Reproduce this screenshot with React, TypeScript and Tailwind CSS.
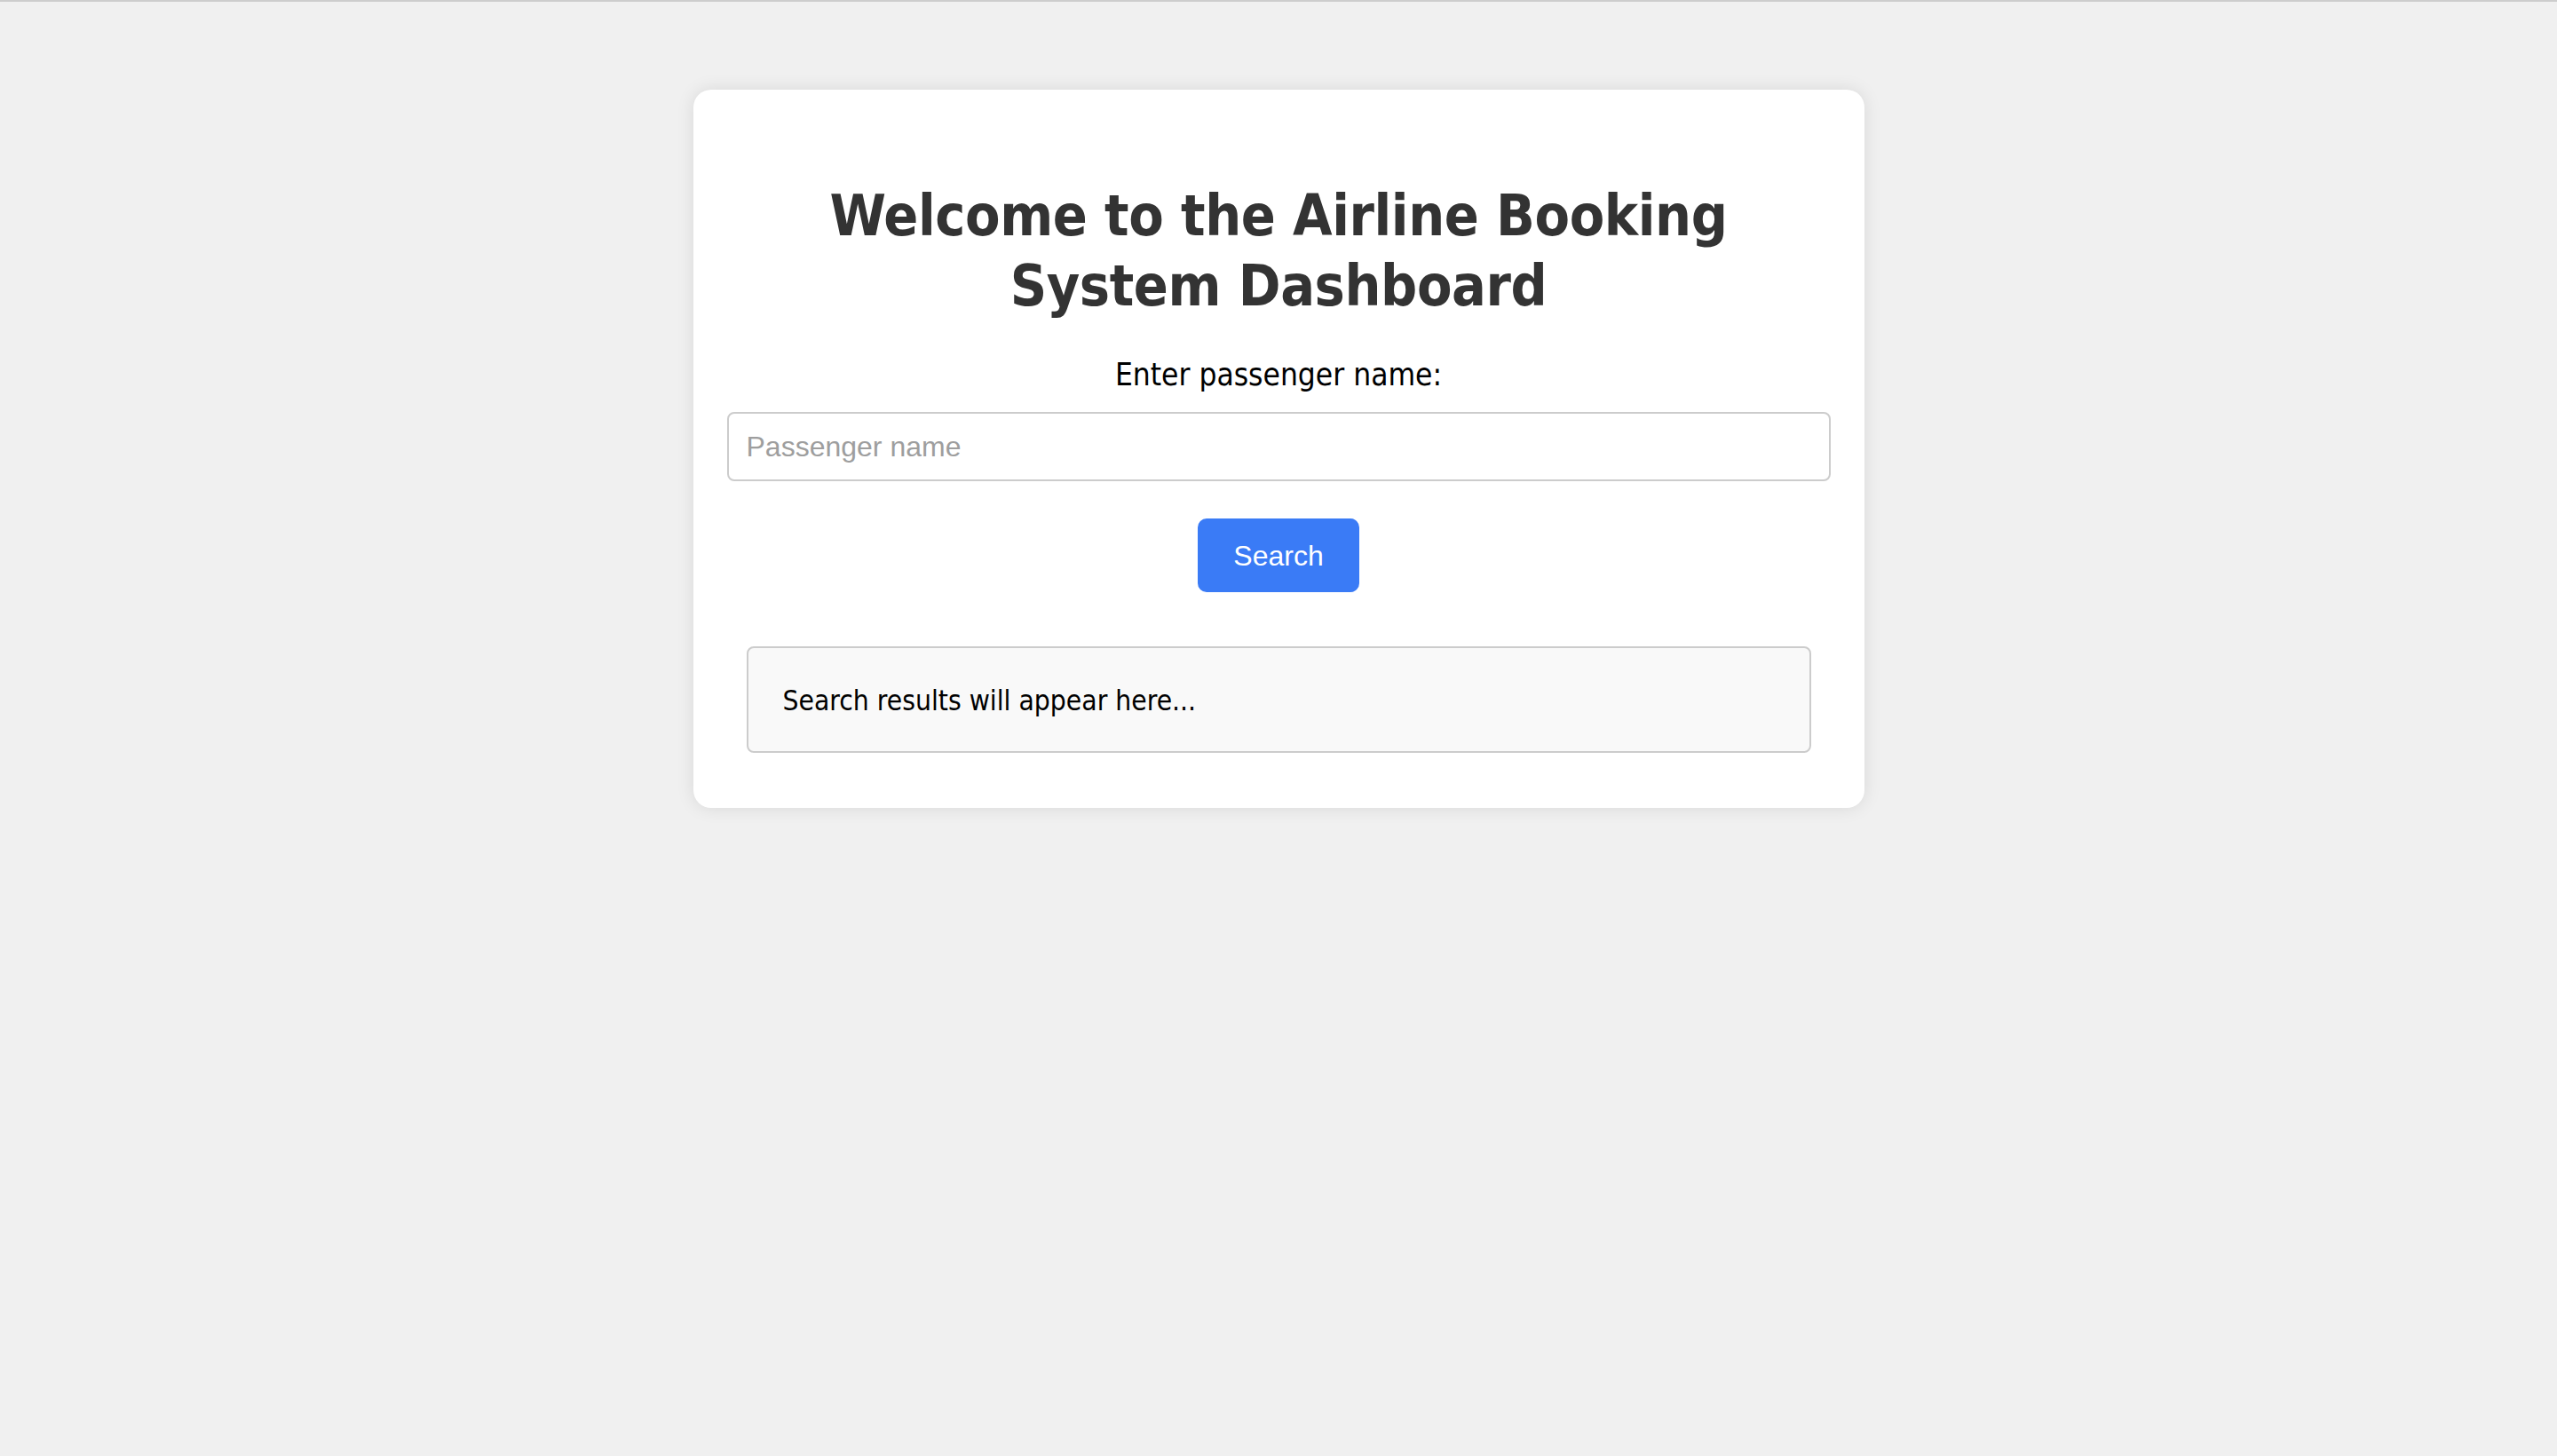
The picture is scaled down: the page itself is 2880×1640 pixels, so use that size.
import { useState } from "react";

const tahoma = "font-['DejaVu_Sans_Condensed','DejaVu_Sans',sans-serif]";
const system = "font-['Liberation_Sans',Arial,sans-serif]";

export default function App() {
  const [name, setName] = useState("");

  return (
    <div className="min-h-screen border-t-2 border-[#cdcdcd] bg-[#f0f0f0] pt-[99px]">
      <div className="mx-auto w-[1319px] rounded-[20px] bg-white px-[38px] pb-[62px] pt-[103px] shadow-[0_0_20px_rgba(0,0,0,0.1)]">
        <h1 className={`${tahoma} text-center text-[64px] font-bold leading-[79px] tracking-[-0.4px] text-[#333]`}>
          Welcome to the Airline Booking
          <br />
          System Dashboard
        </h1>

        <label
          htmlFor="passenger"
          className={`${tahoma} mt-[39px] block text-center text-[35px] leading-[42px] text-black`}
        >
          Enter passenger name:
        </label>
        <input
          id="passenger"
          type="text"
          value={name}
          onChange={(e) => setName(e.target.value)}
          placeholder="Passenger name"
          className={`${system} mt-[21px] block h-[78px] w-full rounded-[8px] border-2 border-[#cccccc] px-[20px] text-[32px] text-black outline-none placeholder:text-[#9e9e9e]`}
        />

        <div className="mt-[42px] flex justify-center">
          <button
            type="button"
            className={`${system} h-[83px] w-[182px] rounded-[10px] bg-[#3a7bf6] text-[32px] text-white`}
          >
            Search
          </button>
        </div>

        {/* Results */}
        <div className="mx-[22px] mt-[61px] flex h-[120px] items-center rounded-[8px] border-2 border-[#cccccc] bg-[#f9f9f9] px-[39px] pt-[2px]">
          <p className={`${tahoma} text-[31.5px] leading-[40px] text-black`}>
            Search results will appear here...
          </p>
        </div>
      </div>
    </div>
  );
}
